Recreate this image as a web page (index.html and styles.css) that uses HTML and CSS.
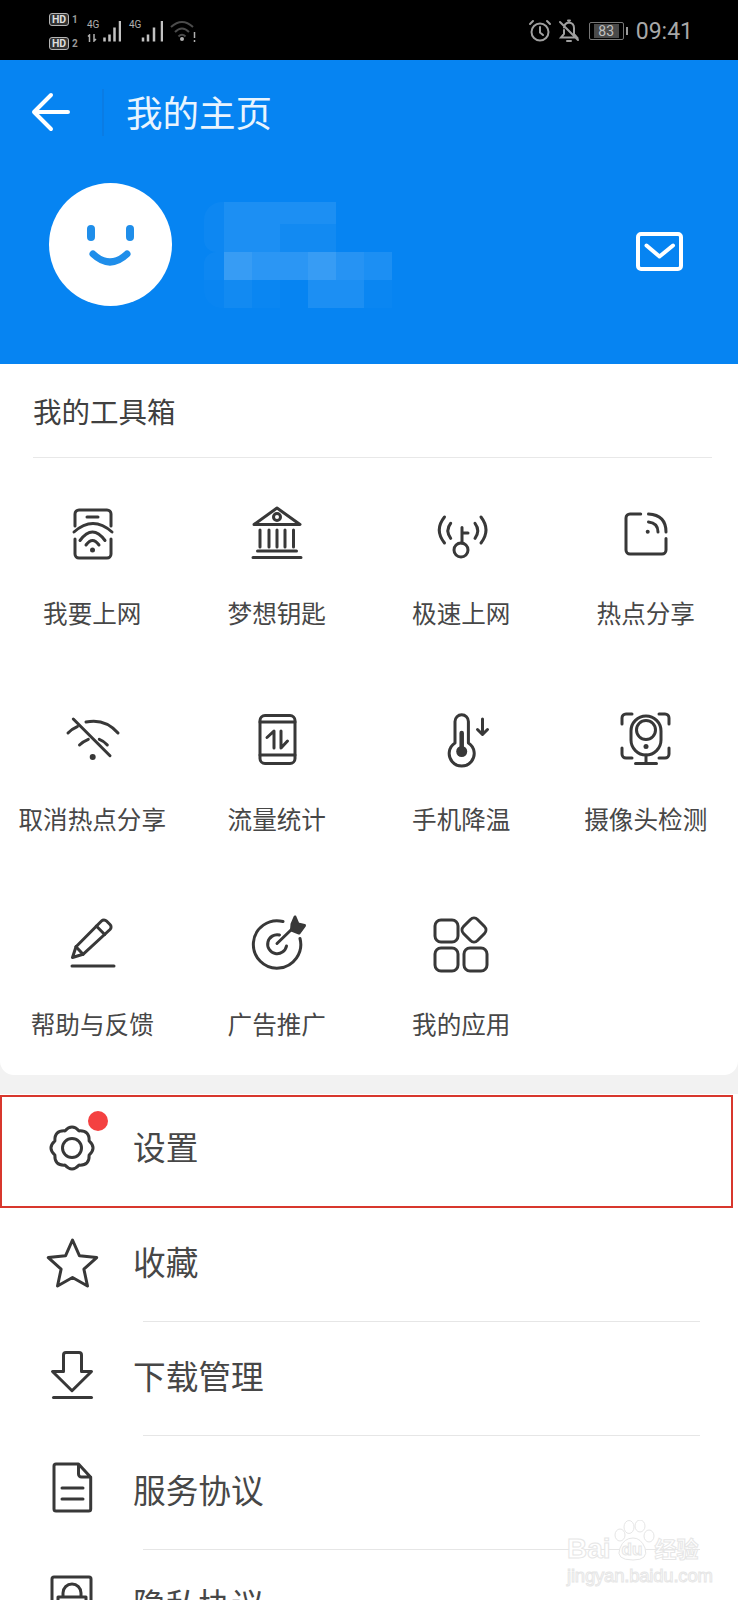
FILE: index.html
```html
<!DOCTYPE html>
<html lang="zh-CN">
  <head>
    <meta charset="UTF-8" />
    <meta name="viewport" content="width=device-width, initial-scale=1.0" />
    <title>我的主页</title>
    <link rel="stylesheet" href="styles.css">
  </head>
  <body>
    <div class="status-bar">
      <div class="status-left">
        <div class="sims">
          <div class="sim"><span class="hd">HD</span><span class="slot">1</span></div>
          <div class="sim"><span class="hd">HD</span><span class="slot">2</span></div>
        </div>
        <div class="signal">
          <div class="net">
            <span>4G</span>
            <svg width="11" height="8" viewBox="0 0 11 8"><path class="st" d="M2.500 8V1L1 2.500M7 0v7l2-2"/></svg>
          </div>
          <svg width="18" height="22" viewBox="0 0 18 22"><path class="bars" d="M1.500 21.500v-4M6.500 21.500v-7M11.500 21.500v-14M17 21.500V1"/></svg>
        </div>
        <div class="signal second">
          <div class="net"><span>4G</span></div>
          <svg width="22" height="22" viewBox="0 0 22 22"><path class="bars" d="M2 21.500v-4M7 21.500v-7M13 21.500v-14M21 21.500V1"/></svg>
        </div>
        <svg class="wifi" width="28" height="24" viewBox="0 0 28 24">
          <path class="dim" d="M2 8Q13-2 24 8M6 13Q13 6 20 13M9.500 17.500Q13 14 16.500 17.500"/>
          <circle cx="13" cy="20" r="2" fill="#b0b0b0"/>
          <path class="st" d="M25.500 13v6M25.500 21v2"/>
        </svg>
      </div>
      <div class="status-right">
        <svg width="24" height="24" viewBox="0 0 24 24">
          <circle class="st2" cx="12" cy="13" r="8.500"/>
          <path class="st2" d="M12 8v5.500l3 2.500M2 5l3-3M22 5l-3-3"/>
        </svg>
        <svg class="bell" width="24" height="24" viewBox="0 0 24 24">
          <path class="st2" d="M7 8.500Q7.500 4 12 3.500Q17 4 17 9V15L20 18.500H4L7 15V11M11 1.500h2M10 22h4M3 3l18 18"/>
        </svg>
        <div class="battery"><span class="level">83</span></div>
        <i class="battery-tip"></i>
        <span class="time">09:41</span>
      </div>
    </div>

    <div class="hero">
      <div class="topbar">
        <svg width="40" height="40" viewBox="0 0 40 40"><path class="back" d="M4 20H38M21 3L4 20L21 37"/></svg>
        <i class="top-line"></i>
        <span class="top-title">我的主页</span>
      </div>
      <div class="profile">
        <svg class="avatar" width="123" height="123" viewBox="0 0 123 123">
          <circle cx="61.500" cy="61.500" r="61.500" fill="#fff"/>
          <path class="face" d="M42 46v8M81 46v8"/>
          <path class="smile" d="M44 71Q61 87 78 71"/>
        </svg>
        <div class="mosaic">
          <i class="blob-top"></i><i class="m2"></i><i class="m2"></i><i class="m2"></i><i class="m2"></i><i></i><i></i><i></i>
          <i class="blob-mid"></i><i class="m2"></i><i class="m2"></i><i class="m1"></i><i class="m1"></i><i></i><i></i><i></i>
          <i class="blob-low"></i><i class="m4"></i><i class="m3"></i><i class="m3"></i><i class="m4"></i><i class="m5"></i><i class="m2"></i><i></i>
          <i class="blob-end"></i><i class="m1"></i><i class="m0"></i><i></i><i class="m2"></i><i class="m2"></i><i class="m0"></i><i></i>
        </div>
        <svg class="mail" width="47" height="39" viewBox="0 0 47 39">
          <rect class="mail-box" x="2" y="2" width="43" height="35" rx="3"/>
          <path class="mail-v" d="M10.500 13.500l13 11L37 13.500"/>
        </svg>
      </div>
    </div>

    <div class="tools">
      <div class="tool-card">
        <div class="tool-head">我的工具箱</div>
        <div class="tool-grid">
          <div class="tool">
            <svg class="ic" viewBox="0 0 64 64">
              <path d="M15 25V13a4 4 0 0 1 4-4H47a4 4 0 0 1 4 4V25M15 38V53a4 4 0 0 0 4 4H47a4 4 0 0 0 4-4V38M27 16H38"/>
              <path d="M14 31Q33 14 52 31M20 39.500Q32.500 22.500 45 39.500M26 44Q32.500 35 39 44"/>
              <circle class="fill" cx="32.500" cy="49" r="2.500"/>
            </svg>
            <span>我要上网</span>
          </div>
          <div class="tool">
            <svg class="ic" viewBox="0 0 64 64">
              <path d="M9 23.500L32 7L55 23.500Z"/>
              <circle cx="32" cy="16" r="3.500"/>
              <path d="M15 29V46M24 29V46M32 29V46M40 29V46M48.500 29V46M12.500 50H51.500M8 56.500H56"/>
            </svg>
            <span>梦想钥匙</span>
          </div>
          <div class="tool">
            <svg class="ic" viewBox="0 0 64 64">
              <circle cx="32" cy="49" r="7"/>
              <path d="M33 42V26.500M33 32H39"/>
              <path d="M21.700 22.300Q16 29.500 21.700 37.300M15.500 16Q5 29 15.500 42M46 22.300Q51.500 29.500 46 37.300M52 16Q62 29 52 42"/>
            </svg>
            <span>极速上网</span>
          </div>
          <div class="tool">
            <svg class="ic" viewBox="0 0 64 64">
              <path d="M26.700 13H16a4 4 0 0 0-4 4V49a4 4 0 0 0 4 4H48a4 4 0 0 0 4-4V37.500"/>
              <path d="M34.500 13Q52 14 52 31M34.500 21Q44 22 44 31"/>
              <circle class="fill" cx="33.700" cy="30.700" r="2"/>
            </svg>
            <span>热点分享</span>
          </div>

          <div class="tool">
            <svg class="ic" viewBox="0 0 64 64">
              <path d="M13.300 12L50 48.700M26 15Q45 11 58 26M8 26Q12 22 17.300 19.700M19.500 38Q23 34.500 28.300 32.300M39.300 32.300Q44 34 47.300 38"/>
              <circle class="fill" cx="32.700" cy="50" r="3"/>
            </svg>
            <span>取消热点分享</span>
          </div>
          <div class="tool">
            <svg class="ic" viewBox="0 0 64 64">
              <rect x="15" y="8.500" width="35" height="48" rx="5"/>
              <path d="M15 15H50M15 48H50M29 41V24L22 30.500M36 24V41L42.500 34"/>
            </svg>
            <span>流量统计</span>
          </div>
          <div class="tool">
            <svg class="ic" viewBox="0 0 64 64">
              <path d="M26 36V14.500a6.700 6.700 0 0 1 13.400 0V36a12.500 12.500 0 1 1-13.400 0Z"/>
              <path class="thick" d="M32.700 26V44"/>
              <circle class="fill" cx="32.700" cy="44.500" r="5.500"/>
              <path d="M53.500 12V27M48.500 22.500L53.500 27.500L58.500 22.500"/>
            </svg>
            <span>手机降温</span>
          </div>
          <div class="tool">
            <svg class="ic" viewBox="0 0 64 64">
              <path d="M8 17V11a4 4 0 0 1 4-4H18M45 7H51a4 4 0 0 1 4 4V17M8 41V47a4 4 0 0 0 4 4H18M45 51H51a4 4 0 0 0 4-4V41"/>
              <rect x="17" y="9" width="30" height="39" rx="15"/>
              <circle cx="32" cy="23" r="9.500"/>
              <circle class="fill" cx="32" cy="39.500" r="2.500"/>
              <path d="M32 48V56M21.500 56.500H42.500"/>
            </svg>
            <span>摄像头检测</span>
          </div>

          <div class="tool">
            <svg class="ic" viewBox="0 0 64 64">
              <path d="M12.500 45.500L16 34.700L41.500 9a3.500 3.500 0 0 1 5 0L50 12.500a3.500 3.500 0 0 1 0 5L23 42.300Z"/>
              <path d="M36.300 14L44.700 22.500M16 34.700L23 42.300M12 54H54"/>
            </svg>
            <span>帮助与反馈</span>
          </div>
          <div class="tool">
            <svg class="ic" viewBox="0 0 64 64">
              <path d="M38 9.500A23.700 23.700 0 1 0 55 26.500"/>
              <path d="M34.500 23A9.500 9.500 0 1 0 41.500 34"/>
              <path d="M32 31.500L47 17"/>
              <path class="fill-line" d="M47 12L50 5L53 12L59.500 13.500L54 21L46.500 18Z"/>
            </svg>
            <span>广告推广</span>
          </div>
          <div class="tool">
            <svg class="ic" viewBox="0 0 64 64">
              <rect x="6" y="8" width="23" height="22" rx="6"/>
              <path d="M41.500 7.500a5 5 0 0 1 7 0L55.500 14.500a5 5 0 0 1 0 7L48.500 28.500a5 5 0 0 1-7 0L34.500 21.500a5 5 0 0 1 0-7Z"/>
              <rect x="6" y="36" width="23" height="23" rx="6"/>
              <rect x="35" y="36" width="23" height="23" rx="6"/>
            </svg>
            <span>我的应用</span>
          </div>
        </div>
      </div>
    </div>

    <div class="menu">
      <div class="row picked">
        <div class="row-icon">
          <svg class="ic" viewBox="0 0 64 64">
            <path d="M24.900 13.900Q32 6 39.100 13.900Q49.700 13.300 49.100 23.900Q57 31 49.100 38.100Q49.700 48.700 39.100 48.100Q32 56 24.900 48.100Q14.300 48.700 14.900 38.100Q7 31 14.900 23.900Q14.300 13.300 24.900 13.900Z"/>
            <circle cx="32" cy="31" r="9.500"/>
          </svg>
          <i class="dot"></i>
        </div>
        <span>设置</span>
      </div>
      <div class="row">
        <div class="row-icon">
          <svg class="ic" viewBox="0 0 64 64">
            <polygon points="32.500,10 39.500,25.800 56.700,27.600 43.900,39.200 47.500,56 32.500,47.500 17.500,56 21.100,39.200 8.300,27.600 25.500,25.800"/>
          </svg>
        </div>
        <span>收藏</span>
      </div>
      <div class="sep"></div>
      <div class="row">
        <div class="row-icon">
          <svg class="ic" viewBox="0 0 64 64">
            <path d="M23.500 27.500V11a2.500 2.500 0 0 1 2.500-2.500H39a2.500 2.500 0 0 1 2.500 2.500V27.500H51.500L32 46.700L12.500 27.500Z"/>
            <path d="M13.500 53.500H51.500"/>
          </svg>
        </div>
        <span>下载管理</span>
      </div>
      <div class="sep"></div>
      <div class="row">
        <div class="row-icon">
          <svg class="ic" viewBox="0 0 64 64">
            <path d="M38.500 6H16a2 2 0 0 0-2 2V51a2 2 0 0 0 2 2H48.700a2 2 0 0 0 2-2V19.300ZM38.500 6V16a3 3 0 0 0 3 3H50.700M22 30H43M22 41H43"/>
          </svg>
        </div>
        <span>服务协议</span>
      </div>
      <div class="sep"></div>
      <div class="row">
        <div class="row-icon">
          <svg class="ic" viewBox="0 0 64 64">
            <rect x="12" y="5" width="39" height="47" rx="2"/>
            <path d="M23 25V21a9 9 0 0 1 18 0V25M18 25H46V42H18ZM32 30V36"/>
          </svg>
        </div>
        <span>隐私协议</span>
      </div>
    </div>

    <div class="watermark">
      <div class="mark-top">
        <span class="mark-bai">Bai</span>
        <div class="paw">
          <svg width="44" height="42" viewBox="0 0 44 42">
            <ellipse cx="9" cy="15" rx="5" ry="6"/>
            <ellipse cx="18" cy="7" rx="5" ry="6.500"/>
            <ellipse cx="29" cy="6" rx="5" ry="6"/>
            <ellipse cx="38" cy="16" rx="5" ry="6"/>
            <path d="M22 18Q30 18 34 28Q38 40 22 40Q4 40 9 28Q13 18 22 18Z"/>
          </svg>
          <span class="paw-du">du</span>
        </div>
        <span class="mark-jy">经验</span>
      </div>
      <div class="mark-url">jingyan.baidu.com</div>
    </div>
  </body>
</html>
```

FILE: styles.css
```css
html,
body {
  margin: 0;
  height: 1600px;
  overflow: hidden;
  background: #fff;
}

body {
  position: relative;
  font-family: "Noto Sans CJK SC", "Noto Sans", sans-serif;
  color: #474747;
}

i {
  display: block;
}

/* status bar */
.status-bar {
  height: 60px;
  box-sizing: border-box;
  padding-top: 2px;
  background: #000;
  display: flex;
  justify-content: space-between;
  align-items: center;
  color: #a8a8a8;
  font-family: Roboto, sans-serif;
}

.status-left {
  display: flex;
  align-items: center;
  margin-left: 49px;
}

.sims {
  width: 38px;
  display: flex;
  flex-direction: column;
  gap: 11px;
}

.sim {
  display: flex;
  align-items: center;
  gap: 3px;
}

.hd {
  width: 20px;
  height: 13px;
  border: 1px solid #b5b5b5;
  border-radius: 3px;
  box-sizing: border-box;
  background: #333;
  font-size: 10.5px;
  font-weight: 700;
  line-height: 11px;
  text-align: center;
  color: #ddd;
}

.slot {
  font-size: 10px;
  line-height: 11px;
  font-weight: 700;
  color: #999;
}

.signal {
  display: flex;
  align-items: center;
  gap: 5px;
  height: 22px;
}

.second {
  margin-left: 8px;
  gap: 1px;
}

.net {
  display: flex;
  flex-direction: column;
  justify-content: space-between;
  height: 22px;
  width: 11px;
  font-size: 10px;
  line-height: 10px;
  color: #b0b0b0;
}

.second .net {
  justify-content: flex-start;
}

.bars {
  fill: none;
  stroke: #c2c2c2;
  stroke-width: 2.5;
}

.wifi {
  margin-left: 6px;
}

.dim {
  fill: none;
  stroke: #4c4c4c;
  stroke-width: 2;
}

.st {
  fill: none;
  stroke: #b0b0b0;
  stroke-width: 1.5;
}

.st2 {
  fill: none;
  stroke: #a0a0a0;
  stroke-width: 2;
  stroke-linecap: round;
}

.status-right {
  display: flex;
  align-items: center;
  margin-right: 45px;
}

.bell {
  margin-left: 5px;
}

.battery {
  width: 35px;
  height: 18px;
  margin-left: 8px;
  box-sizing: border-box;
  border: 1px solid #777;
  border-radius: 2px;
  padding: 1px 4px 1px 4px;
}

.level {
  display: block;
  height: 14px;
  background: #4a4a4a;
  font-size: 14px;
  line-height: 14px;
  text-align: center;
  color: #c0c0c0;
}

.battery-tip {
  width: 2px;
  height: 8px;
  margin-left: 2px;
  background: #999;
}

.time {
  margin-left: 8px;
  font-size: 23px;
  color: #a8a8a8;
}

/* blue header */
.hero {
  height: 304px;
  background: #0684f2;
}

.topbar {
  height: 104px;
  padding-left: 30px;
  display: flex;
  align-items: center;
}

.back {
  fill: none;
  stroke: #fff;
  stroke-width: 4;
  stroke-linecap: round;
  stroke-linejoin: round;
}

.top-line {
  width: 2px;
  height: 47px;
  margin-left: 32px;
  background: #0a7ce4;
}

.top-title {
  margin-left: 22px;
  margin-bottom: 2px;
  font-size: 36.5px;
  color: #e9f4fe;
}

.profile {
  display: flex;
  margin-top: 19px;
  padding-left: 49px;
}

.face {
  fill: none;
  stroke: #1f8eea;
  stroke-width: 8;
  stroke-linecap: round;
}

.smile {
  fill: none;
  stroke: #1f8eea;
  stroke-width: 7;
  stroke-linecap: round;
}

.mosaic {
  display: grid;
  grid-template-columns: repeat(8, 28px);
  grid-template-rows: 22px 28px 28px 28px;
  margin-left: 24px;
  margin-top: 19px;
  width: 224px;
}

.m0 { background: rgba(255, 255, 255, 0.02); }
.m1 { background: rgba(255, 255, 255, 0.05); }
.m2 { background: rgba(255, 255, 255, 0.09); }
.m3 { background: rgba(255, 255, 255, 0.15); }
.m4 { background: rgba(255, 255, 255, 0.2); }
.m5 { background: rgba(255, 255, 255, 0.13); }

.blob-top,
.blob-mid,
.blob-low,
.blob-end {
  margin-left: 8px;
  background: rgba(255, 255, 255, 0.03);
}

.blob-top {
  border-top-left-radius: 18px;
}

.blob-mid {
  border-bottom-left-radius: 12px;
}

.blob-low {
  border-top-left-radius: 12px;
}

.blob-end {
  border-bottom-left-radius: 18px;
  background: rgba(255, 255, 255, 0.015);
}

.mail {
  margin-left: auto;
  margin-right: 55px;
  margin-top: 49px;
}

.mail-box,
.mail-v {
  fill: none;
  stroke: #fff;
  stroke-width: 4;
  stroke-linecap: round;
  stroke-linejoin: round;
}

/* tool grid */
.tools {
  background: #f2f2f2;
  padding-bottom: 19.5px;
}

.tool-card {
  background: #fff;
  border-radius: 0 0 14px 14px;
}

.tool-head {
  height: 93px;
  margin: 0 26px 0 33px;
  border-bottom: 1px solid #e8e8e8;
  font-size: 28.5px;
  line-height: 93px;
  color: #404040;
}

.tool-grid {
  display: grid;
  grid-template-columns: repeat(4, 1fr);
  grid-auto-rows: 205.5px;
}

.tool {
  display: flex;
  flex-direction: column;
  align-items: center;
  padding-top: 43px;
  font-size: 24.6px;
  line-height: 34px;
  white-space: nowrap;
}

.tool span {
  margin-top: 30px;
}

.ic {
  width: 64px;
  height: 64px;
  flex: none;
  fill: none;
  stroke: #383838;
  stroke-width: 3;
  stroke-linecap: round;
  stroke-linejoin: round;
}

.ic .fill {
  fill: #383838;
  stroke: none;
}

.ic .fill-line {
  fill: #383838;
}

.ic .thick {
  stroke-width: 4.5;
}

/* settings list */
.menu {
  padding-top: 1px;
  font-size: 32.7px;
}

.row {
  height: 113px;
  box-sizing: border-box;
  padding: 0 0 6px 40px;
  display: flex;
  align-items: center;
}

.row span {
  margin-left: 29px;
  margin-bottom: 3px;
}

.row-icon {
  position: relative;
  width: 64px;
  height: 64px;
}

.picked {
  margin-right: 5px;
  border: 2px solid #d8372d;
  padding-left: 38px;
}

.picked span {
  margin-bottom: 7px;
}

.dot {
  position: absolute;
  left: 48px;
  top: -6px;
  width: 20px;
  height: 20px;
  border-radius: 50%;
  background: #f44141;
}

.sep {
  height: 1px;
  margin: 0 38px 0 143px;
  background: #e6e6e6;
}

/* image site watermark, drawn over the list */
.watermark {
  position: absolute;
  left: 567px;
  top: 1520px;
  width: 136px;
  color: #fff;
  font-family: "Liberation Sans", "Noto Sans CJK SC", sans-serif;
  -webkit-text-stroke: 1px #e6e6e6;
}

.mark-top {
  display: flex;
  align-items: flex-end;
  height: 42px;
}

.mark-bai {
  font-size: 28px;
  line-height: 26px;
  font-weight: 700;
}

.paw {
  position: relative;
  width: 44px;
  height: 42px;
}

.paw svg {
  display: block;
  fill: #fff;
  stroke: #e6e6e6;
}

.paw-du {
  position: absolute;
  left: 11px;
  bottom: 3px;
  font-size: 17px;
  line-height: 18px;
  font-weight: 700;
}

.mark-jy {
  font-size: 22px;
  line-height: 24px;
  font-weight: 700;
}

.mark-url {
  margin-top: 3px;
  font-size: 18.5px;
  line-height: 22px;
  white-space: nowrap;
  letter-spacing: -0.2px;
}
```
